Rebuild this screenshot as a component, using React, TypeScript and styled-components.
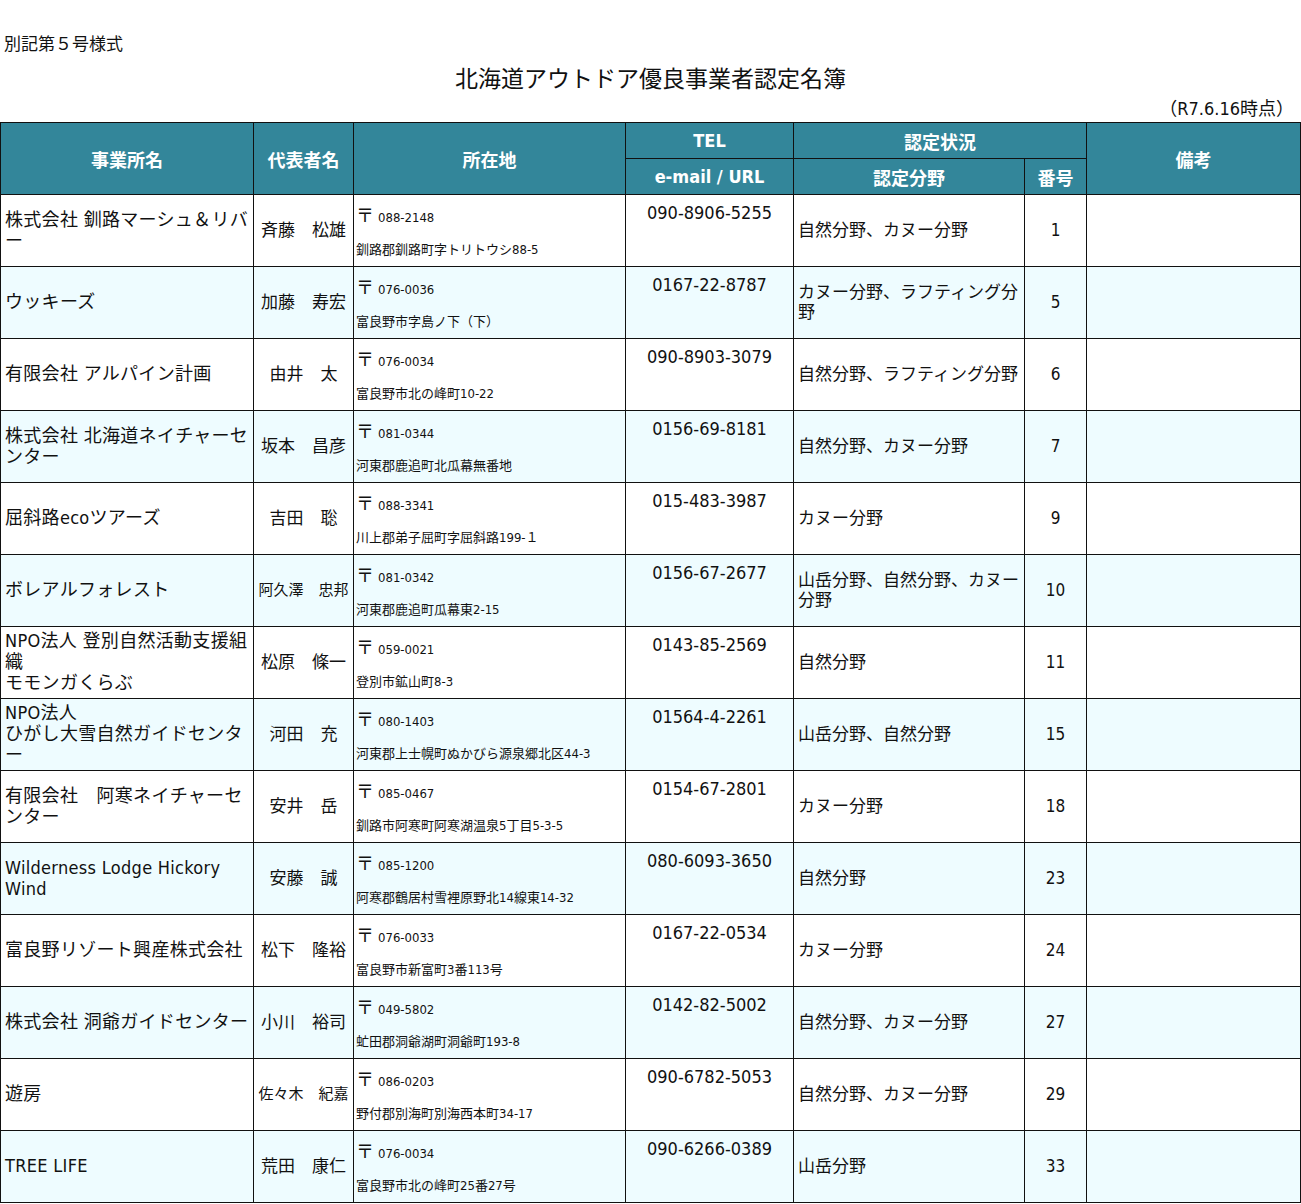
import styled, { createGlobalStyle } from "styled-components"

const Global = createGlobalStyle`
  body {
    margin: 0;
    background: #fff;
    font-family: "Liberation Sans Narrow", "DejaVu Sans Condensed", "Noto Sans CJK JP", sans-serif;
    color: #111;
  }
`

const Page = styled.div`
  width: 1301px;
  padding-top: 30px;
`

const Note = styled.div`
  font-size: 17px;
  padding-left: 4px;
  height: 22px;
`

const Title = styled.h1`
  margin: 8px 0 0;
  text-align: center;
  font-size: 23px;
  font-weight: normal;
  height: 34px;
`

const AsOf = styled.div`
  text-align: right;
  font-size: 18px;
  padding-right: 7px;
  height: 28px;
  line-height: 30px;
`

const Table = styled.table`
  border-collapse: collapse;
  table-layout: fixed;
  width: 1300px;
`

const Th = styled.th`
  background: #33869a;
  color: #fff;
  font-weight: bold;
  font-size: 18px;
  border: 1.5px solid #111;
  height: 35px;
  padding: 0;
`

const Row = styled.tr<{ $alt: boolean }>`
  height: 72px;
  background: ${(p) => (p.$alt ? "#eefcff" : "#fff")};
`

const Td = styled.td<{ $align?: string; $valign?: string; $size?: number }>`
  border: 1.5px solid #111;
  padding: 0 4px;
  font-size: ${(p) => p.$size ?? 17}px;
  text-align: ${(p) => p.$align ?? "left"};
  vertical-align: ${(p) => p.$valign ?? "middle"};
  line-height: 1.15;
`

const NameCell = styled(Td)`
  font-size: 18px;
  white-space: pre-line;
  letter-spacing: 0.3px;
`

const Addr = styled.div`
  display: flex;
  flex-direction: column;
  justify-content: space-between;
  height: 62px;
  font-size: 13px;
  padding: 6px 0 4px;
  box-sizing: border-box;
  margin-left: -2px;
`

const Zip = styled.span`
  font-size: 13px;
  & b { font-size: 18px; font-weight: normal; margin-right: 4px; }
`

const Tel = styled.div`
  padding-top: 8px;
  text-align: center;
  font-size: 18px;
  height: 62px;
`

const rows = [
  ["株式会社 釧路マーシュ＆リバー", "斉藤　松雄", "088-2148", "釧路郡釧路町字トリトウシ88-5", "090-8906-5255", "自然分野、カヌー分野", "1"],
  ["ウッキーズ", "加藤　寿宏", "076-0036", "富良野市字島ノ下（下）", "0167-22-8787", "カヌー分野、ラフティング分野", "5"],
  ["有限会社 アルパイン計画", "由井　太", "076-0034", "富良野市北の峰町10-22", "090-8903-3079", "自然分野、ラフティング分野", "6"],
  ["株式会社 北海道ネイチャーセンター", "坂本　昌彦", "081-0344", "河東郡鹿追町北瓜幕無番地", "0156-69-8181", "自然分野、カヌー分野", "7"],
  ["屈斜路ecoツアーズ", "吉田　聡", "088-3341", "川上郡弟子屈町字屈斜路199-１", "015-483-3987", "カヌー分野", "9"],
  ["ボレアルフォレスト", "阿久澤　忠邦", "081-0342", "河東郡鹿追町瓜幕東2-15", "0156-67-2677", "山岳分野、自然分野、カヌー分野", "10"],
  ["NPO法人 登別自然活動支援組織\nモモンガくらぶ", "松原　條一", "059-0021", "登別市鉱山町8-3", "0143-85-2569", "自然分野", "11"],
  ["NPO法人\nひがし大雪自然ガイドセンター", "河田　充", "080-1403", "河東郡上士幌町ぬかびら源泉郷北区44-3", "01564-4-2261", "山岳分野、自然分野", "15"],
  ["有限会社　阿寒ネイチャーセンター", "安井　岳", "085-0467", "釧路市阿寒町阿寒湖温泉5丁目5-3-5", "0154-67-2801", "カヌー分野", "18"],
  ["Wilderness Lodge Hickory\nWind", "安藤　誠", "085-1200", "阿寒郡鶴居村雪裡原野北14線東14-32", "080-6093-3650", "自然分野", "23"],
  ["富良野リゾート興産株式会社", "松下　隆裕", "076-0033", "富良野市新富町3番113号", "0167-22-0534", "カヌー分野", "24"],
  ["株式会社 洞爺ガイドセンター", "小川　裕司", "049-5802", "虻田郡洞爺湖町洞爺町193-8", "0142-82-5002", "自然分野、カヌー分野", "27"],
  ["遊房", "佐々木　紀嘉", "086-0203", "野付郡別海町別海西本町34-17", "090-6782-5053", "自然分野、カヌー分野", "29"],
  ["TREE LIFE", "荒田　康仁", "076-0034", "富良野市北の峰町25番27号", "090-6266-0389", "山岳分野", "33"],
]

export default function App() {
  return (
    <Page>
      <Global />
      <Note>別記第５号様式</Note>
      <Title>北海道アウトドア優良事業者認定名簿</Title>
      <AsOf>（R7.6.16時点）</AsOf>
      <Table>
        <colgroup>
          <col style={{ width: 253 }} />
          <col style={{ width: 100 }} />
          <col style={{ width: 272 }} />
          <col style={{ width: 168 }} />
          <col style={{ width: 231 }} />
          <col style={{ width: 62 }} />
          <col style={{ width: 214 }} />
        </colgroup>
        <thead>
          <tr>
            <Th rowSpan={2}>事業所名</Th>
            <Th rowSpan={2}>代表者名</Th>
            <Th rowSpan={2}>所在地</Th>
            <Th>TEL</Th>
            <Th colSpan={2}>認定状況</Th>
            <Th rowSpan={2}>備考</Th>
          </tr>
          <tr>
            <Th>e-mail / URL</Th>
            <Th>認定分野</Th>
            <Th>番号</Th>
          </tr>
        </thead>
        <tbody>
          {rows.map((r, i) => (
            <Row key={i} $alt={i % 2 === 1}>
              <NameCell>{r[0]}</NameCell>
              <Td $align="center" $size={r[1].length > 5 ? 15 : 17}>{r[1]}</Td>
              <Td>
                <Addr>
                  <Zip><b>〒</b>{r[2]}</Zip>
                  <span>{r[3]}</span>
                </Addr>
              </Td>
              <Td $valign="top"><Tel>{r[4]}</Tel></Td>
              <Td>{r[5]}</Td>
              <Td $align="center">{r[6]}</Td>
              <Td />
            </Row>
          ))}
        </tbody>
      </Table>
    </Page>
  )
}
